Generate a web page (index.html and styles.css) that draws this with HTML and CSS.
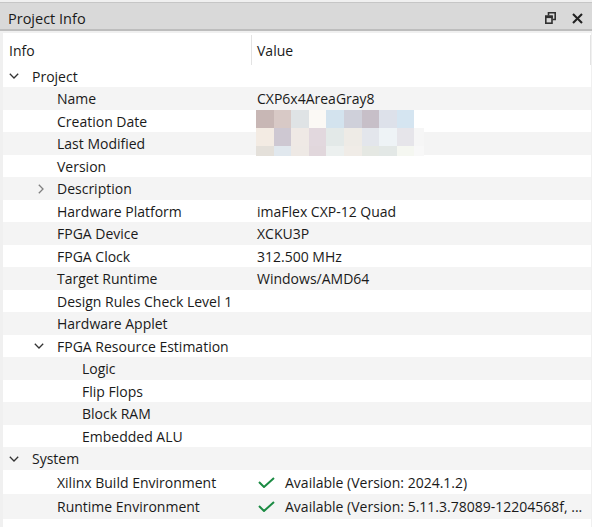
FILE: index.html
```html
<!DOCTYPE html>
<html lang="en">
<head>
  <meta charset="UTF-8">
  <title>Project Info</title>
  <link rel="stylesheet" href="styles.css">
</head>
<body>
<div class="titlebar">
  <span class="title">Project Info</span>
  <span class="tools">
    <svg class="tool" width="11" height="12" viewBox="0 0 11 12">
      <path d="M3.5 3.5V0.8h6.7v6.7H7.5" fill="none" stroke="#303030" stroke-width="1.6"/>
      <rect x="0.8" y="4.3" width="6.2" height="6.9" fill="none" stroke="#303030" stroke-width="1.6"/>
      <rect x="0" y="3.5" width="7.8" height="2.6" fill="#303030"/>
    </svg>
    <svg class="tool" width="11" height="11" viewBox="0 0 11 11">
      <path d="M1 1l9 9M10 1l-9 9" stroke="#222" stroke-width="2.1"/>
    </svg>
  </span>
</div>
<div class="tree">
  <div class="tree-head">
    <div class="col col-info">Info</div>
    <div class="col col-value">Value</div>
  </div>

  <div class="row"><div class="key l0"><span class="twisty"><svg width="10" height="6" viewBox="0 0 10 6"><path d="M0.8 0.8L5 5l4.2-4.2" fill="none" stroke="#333" stroke-width="1.3"/></svg></span>Project</div><div class="val"></div></div>
  <div class="row"><div class="key l1"><span class="twisty"></span>Name</div><div class="val">CXP6x4AreaGray8</div></div>
  <div class="row"><div class="key l1"><span class="twisty"></span>Creation Date</div><div class="val"></div></div>
  <div class="row"><div class="key l1"><span class="twisty"></span>Last Modified</div><div class="val"></div></div>
  <div class="row"><div class="key l1"><span class="twisty"></span>Version</div><div class="val"></div></div>
  <div class="row"><div class="key l1"><span class="twisty shut"><svg width="6" height="10" viewBox="0 0 6 10"><path d="M0.8 0.8L5 5 0.8 9.2" fill="none" stroke="#808080" stroke-width="1.3"/></svg></span>Description</div><div class="val"></div></div>
  <div class="row"><div class="key l1"><span class="twisty"></span>Hardware Platform</div><div class="val">imaFlex CXP-12 Quad</div></div>
  <div class="row"><div class="key l1"><span class="twisty"></span>FPGA Device</div><div class="val">XCKU3P</div></div>
  <div class="row"><div class="key l1"><span class="twisty"></span>FPGA Clock</div><div class="val">312.500 MHz</div></div>
  <div class="row"><div class="key l1"><span class="twisty"></span>Target Runtime</div><div class="val">Windows/AMD64</div></div>
  <div class="row"><div class="key l1"><span class="twisty"></span>Design Rules Check Level 1</div><div class="val"></div></div>
  <div class="row"><div class="key l1"><span class="twisty"></span>Hardware Applet</div><div class="val"></div></div>
  <div class="row"><div class="key l1"><span class="twisty"><svg width="10" height="6" viewBox="0 0 10 6"><path d="M0.8 0.8L5 5l4.2-4.2" fill="none" stroke="#333" stroke-width="1.3"/></svg></span>FPGA Resource Estimation</div><div class="val"></div></div>
  <div class="row"><div class="key l2"><span class="twisty"></span>Logic</div><div class="val"></div></div>
  <div class="row"><div class="key l2"><span class="twisty"></span>Flip Flops</div><div class="val"></div></div>
  <div class="row"><div class="key l2"><span class="twisty"></span>Block RAM</div><div class="val"></div></div>
  <div class="row"><div class="key l2"><span class="twisty"></span>Embedded ALU</div><div class="val"></div></div>
  <div class="row"><div class="key l0"><span class="twisty"><svg width="10" height="6" viewBox="0 0 10 6"><path d="M0.8 0.8L5 5l4.2-4.2" fill="none" stroke="#333" stroke-width="1.3"/></svg></span>System</div><div class="val"></div></div>
  <div class="row tall"><div class="key l1"><span class="twisty"></span>Xilinx Build Environment</div><div class="val"><svg class="ok" width="17" height="11" viewBox="0 0 17 11"><path d="M1 5l5 5L16 1" fill="none" stroke="#1b8b43" stroke-width="2"/></svg>Available (Version: 2024.1.2)</div></div>
  <div class="row tall"><div class="key l1"><span class="twisty"></span>Runtime Environment</div><div class="val"><svg class="ok" width="17" height="11" viewBox="0 0 17 11"><path d="M1 5l5 5L16 1" fill="none" stroke="#1b8b43" stroke-width="2"/></svg>Available (Version: 5.11.3.78089-12204568f, ...</div></div>

  <!-- pixelated dates -->
  <div class="mosaic">
    <i style="background:#c8b7b5"></i><i style="background:#d8c9c6"></i><i style="background:#dfe3e5"></i><i style="background:#fbf9f5"></i><i style="background:#d3e3ee"></i><i style="background:#cfd0da"></i><i style="background:#c7bfc8"></i><i style="background:#dde1ea"></i><i style="background:#d5e5f1"></i><i></i>
    <i style="background:#f3ebe3"></i><i style="background:#cec8d2"></i><i style="background:#efe9e5"></i><i style="background:#e2d8de"></i><i style="background:#e3e9e8"></i><i style="background:#eeebe6"></i><i style="background:#e3e6ec"></i><i style="background:#eef3f6"></i><i style="background:#e6e5ea"></i><i style="background:#f6f6f6"></i>
    <i style="background:#e4e0da"></i><i style="background:#e1e8ee"></i><i style="background:#eee9e5"></i><i style="background:#e1d7dc"></i><i style="background:#ecf0ef"></i><i style="background:#f0ece7"></i><i style="background:#e5e8e3"></i><i style="background:#e3e8e6"></i><i style="background:#f5f7f1"></i><i style="background:#f8f8f8"></i>
  </div>
</div>
</body>
</html>
```

FILE: styles.css
```css
body {
  margin: 0;
  height: 100vh;
  display: flex;
  flex-direction: column;
  background: #f0f0f0;
  font: 14px "Open Sans", "Noto Sans", sans-serif;
  color: #1a1a1a;
  overflow: hidden;
}
.titlebar {
  margin-top: 2px;
  height: 26px;
  border-top: 1px solid #c6c6c6;
  border-bottom: 2px solid #bdbdbd;
  background: #d9d9d9;
  display: flex;
  align-items: center;
  padding: 0 8px 0 8px;
  font-size: 14.5px;
}
.title {
  flex: 1;
  padding-top: 4px;
}
.tools {
  display: flex;
  align-items: center;
  gap: 16px;
  padding-right: 1px;
}
.tool {
  display: block;
  margin-top: 4px;
}
.tree {
  flex: 1;
  margin: 2px 1px 0 3px;
  background: #fff;
  position: relative;
}
.tree-head {
  display: grid;
  grid-template-columns: 249px 1fr;
  height: 31.5px;
}
.col {
  display: flex;
  align-items: center;
  margin-top: 2px;
  padding: 1px 6px 0;
  border-right: 1px solid #e3e3e3;
}
.col-value {
  padding-left: 5px;
}
.row {
  display: grid;
  grid-template-columns: 249px 1fr;
  height: 22.5px;
  padding-top: 1px;
  box-sizing: border-box;
  align-items: center;
  white-space: nowrap;
}
.row:nth-child(odd) {
  background: #f4f4f4;
}
.row.tall {
  height: 24.5px;
}
.row.tall:last-of-type {
  height: 25px;
}
.key {
  display: flex;
  align-items: center;
  overflow: hidden;
}
.key.l0 { padding-left: 6px; }
.key.l1 { padding-left: 31px; }
.key.l2 { padding-left: 56px; }
.twisty {
  width: 23px;
  flex: none;
  display: flex;
  align-items: center;
}
.twisty svg {
  display: block;
}
.twisty.shut svg {
  margin-left: 4px;
}
.val {
  padding-left: 5px;
  display: flex;
  align-items: center;
  overflow: hidden;
}
.ok {
  flex: none;
  margin: 0 10px 0 1px;
}
.mosaic {
  position: absolute;
  left: 253px;
  top: 77px;
  display: grid;
  grid-template-columns: repeat(9, 17.6px) 10px;
  grid-template-rows: 18px 17.5px 10px;
}
.mosaic i {
  display: block;
}
```
